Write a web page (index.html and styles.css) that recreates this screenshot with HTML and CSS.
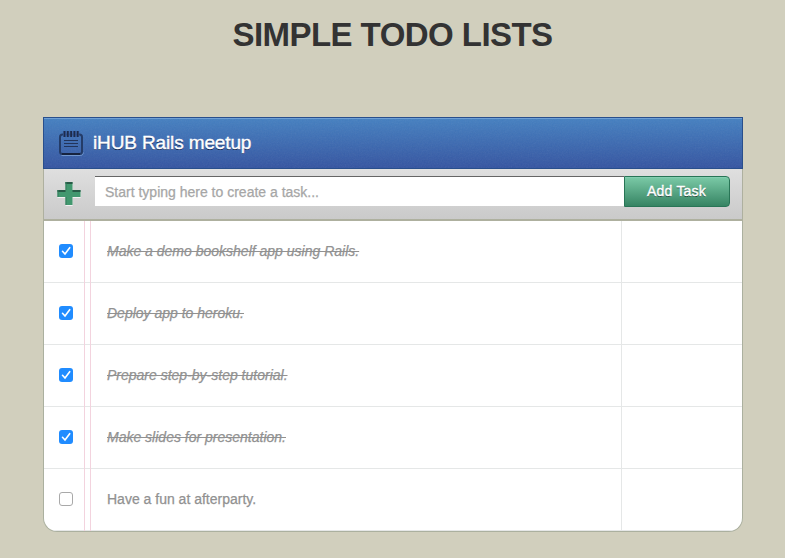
FILE: index.html
```html
<!DOCTYPE html>
<html lang="en">
<head>
<meta charset="utf-8">
<title>Simple Todo Lists</title>
<link rel="stylesheet" href="styles.css">
</head>
<body>
<h1 class="page-title">SIMPLE TODO LISTS</h1>
<main class="card">
  <header class="card-header">
    <svg class="grain" aria-hidden="true"><filter id="n"><feTurbulence type="fractalNoise" baseFrequency="0.7" numOctaves="2"/><feColorMatrix type="saturate" values="0"/></filter><rect width="100%" height="100%" filter="url(#n)"/></svg>
    <svg class="note-icon" width="26" height="26" viewBox="0 0 26 26" fill="none" aria-hidden="true">
      <path d="M3.500 25.500h19q2.500 0 3-3" stroke="#7fa5d8" stroke-opacity=".8"/>
      <rect x="2" y="4.500" width="22" height="19.500" rx="2.500" stroke="#243c68" stroke-width="2"/>
      <path d="M4 24h18" stroke="#16233f" stroke-width="2"/>
      <path d="M6.500 1v6M9.800 1v6M13.100 1v6M16.400 1v6M19.700 1v6" stroke="#3b62a8" stroke-width="3"/>
      <path d="M6.500 1v6M9.800 1v6M13.100 1v6M16.400 1v6M19.700 1v6" stroke="#1d2c4b" stroke-width="1.800"/>
      <path d="M6 10.500h14M6 13.500h14M6 16.500h14" stroke="#22345a" stroke-width="1.200"/>
    </svg>
    <h2 class="list-title">iHUB Rails meetup</h2>
  </header>
  <form class="new-task">
    <svg class="plus-icon" width="24" height="24" viewBox="0 0 24 24" aria-hidden="true">
      <path d="M8.500 1h7v8h8v7h-8v8h-7v-8h-8v-7h8z" fill="#f1f1f1"/>
      <path d="M8.500 0h7v8h8v7h-8v8h-7v-8h-8V8h8z" fill="#42986f"/>
      <path d="M8.500 0h7v2h-7zM.5 8h8v2h-8zM15.500 8h8v2h-8z" fill="#285b47"/>
      <path d="M9 0v8M1 8v7M9 15v8" stroke="#347b5c"/>
    </svg>
    <input class="task-input" type="text" placeholder="Start typing here to create a task...">
    <button class="add-button" type="button">Add Task</button>
  </form>
  <ul class="tasks">
    <li class="task done"><span class="check-cell"><span class="box"><svg viewBox="0 0 14 14"><path d="M3.500 7.300 6 10l4.700-6.300"/></svg></span></span><span class="rule"></span><span class="label">Make a demo bookshelf app using Rails.</span><span class="actions"></span></li>
    <li class="task done"><span class="check-cell"><span class="box"><svg viewBox="0 0 14 14"><path d="M3.500 7.300 6 10l4.700-6.300"/></svg></span></span><span class="rule"></span><span class="label">Deploy app to heroku.</span><span class="actions"></span></li>
    <li class="task done"><span class="check-cell"><span class="box"><svg viewBox="0 0 14 14"><path d="M3.500 7.300 6 10l4.700-6.300"/></svg></span></span><span class="rule"></span><span class="label">Prepare step-by-step tutorial.</span><span class="actions"></span></li>
    <li class="task done"><span class="check-cell"><span class="box"><svg viewBox="0 0 14 14"><path d="M3.500 7.300 6 10l4.700-6.300"/></svg></span></span><span class="rule"></span><span class="label">Make slides for presentation.</span><span class="actions"></span></li>
    <li class="task"><span class="check-cell"><span class="box"></span></span><span class="rule"></span><span class="label">Have a fun at afterparty.</span><span class="actions"></span></li>
  </ul>
</main>
</body>
</html>
```
FILE: styles.css
```css
* { box-sizing: border-box; }
body {
  margin: 0;
  height: 558px;
  overflow: hidden;
  background: #d1cfbd;
  color: #333;
  font-family: "Liberation Sans", Arial, sans-serif;
}
.page-title {
  margin: 0;
  height: 117px;
  padding-top: 15px;
  font-size: 33px;
  line-height: 40px;
  letter-spacing: -0.55px;
  text-align: center;
}
.card { width: 700px; margin: 0 0 0 43px; }
.card-header {
  position: relative;
  display: flex;
  align-items: center;
  height: 52px;
  padding-left: 14px;
  border: 1px solid #294f8c;
  background: linear-gradient(#4480c1, #3454a1);
  box-shadow: inset 0 1px 0 #6fa0d5;
}
.grain {
  position: absolute;
  inset: 1px 0 0;
  width: 100%;
  height: 49px;
  opacity: .09;
}
.note-icon { position: relative; flex: none; }
.list-title {
  position: relative;
  margin: 0 0 0 9px;
  font-size: 19px;
  font-weight: 400;
  letter-spacing: -0.13px;
  line-height: 24px;
  color: #fff;
  -webkit-text-stroke: .4px #fff;
  text-shadow: 0 1px 0 #14244c;
}
.new-task {
  display: flex;
  align-items: flex-start;
  height: 52px;
  padding: 7px 12px 0 13px;
  border: solid #aeb09f;
  border-width: 0 1px 2px;
  background: linear-gradient(#dfdfdf, #cacaca);
}
.plus-icon { flex: none; margin: 6px 14px 0 0; }
.task-input {
  flex: 1;
  min-width: 0;
  height: 30px;
  padding: 1px 10px 0;
  border: 0;
  border-top: 1px solid #656565;
  border-radius: 0;
  outline: 0;
  background: #fff;
  font: 14px "Liberation Sans", Arial, sans-serif;
}
.task-input::placeholder { color: #a6a6a6; opacity: 1; -webkit-text-stroke: .25px #a6a6a6; }
.add-button {
  width: 106px;
  height: 31px;
  padding: 0 1px 2px 0;
  border: 1px solid #287556;
  border-radius: 0 4px 4px 0;
  background: linear-gradient(#7bcaa7, #368463);
  box-shadow: inset 0 1px 0 #83ceb0;
  font: 14px "Liberation Sans", Arial, sans-serif;
  letter-spacing: .2px;
  color: #fff;
  -webkit-text-stroke: .4px #fff;
  text-shadow: 0 1px 0 #163c2c;
}
.tasks {
  margin: 0;
  padding: 0;
  list-style: none;
  overflow: hidden;
  border: 1px solid #abb09f;
  border-top: 0;
  border-radius: 0 0 14px 14px;
  background: #fff;
}
.task { display: flex; height: 62px; border-bottom: 1px solid #e5e7e7; }
.check-cell {
  display: flex;
  align-items: center;
  width: 40px;
  padding: 0 0 1px 15px;
}
.rule {
  width: 7px;
  margin-bottom: -1px;
  border: solid #f3d3de;
  border-width: 0 1px;
}
.box {
  width: 14px;
  height: 14px;
  border: 1px solid #a9a9a9;
  border-radius: 3px;
  background: #fff;
}
.done .box { border: 0; background: #208cff; }
.box svg { display: block; width: 14px; height: 14px; }
.box path { fill: none; stroke: #fff; stroke-width: 1.6; stroke-linecap: round; }
.label {
  flex: 1;
  padding-left: 16px;
  font-size: 14px;
  line-height: 61px;
  color: #919191;
  -webkit-text-stroke: .25px #919191;
}
.done .label { font-style: italic; text-decoration: line-through; }
.actions { width: 121px; border-left: 1px solid #e5e7e7; margin-bottom: -1px; }
```
